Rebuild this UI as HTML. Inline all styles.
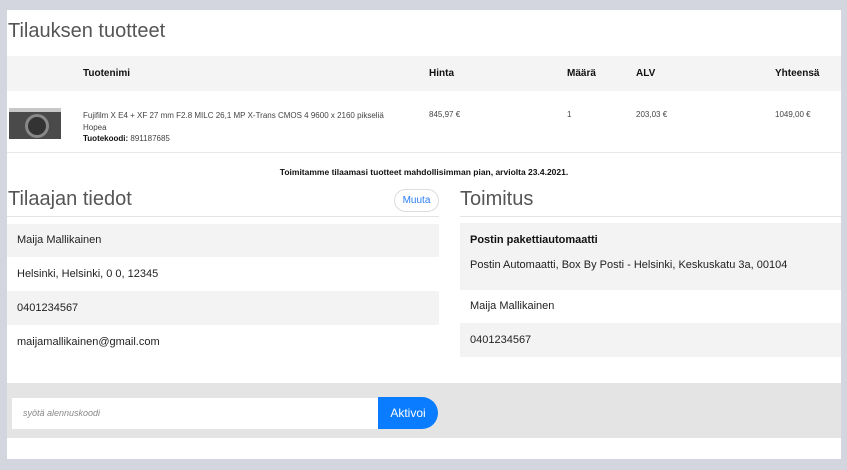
<!DOCTYPE html><html><head><style>
body{margin:0;width:847px;height:470px;background:#d3d6de;font-family:"Liberation Sans",Arial,sans-serif;position:relative;overflow:hidden}
.a{position:absolute;white-space:nowrap}
.p{position:absolute;left:7px;top:10px;width:834px;height:449px;background:#fff}
h1{position:absolute;margin:0;font-weight:normal;color:#555;font-size:20px}
.b{font-weight:bold}
</style></head><body>
<div class="p"></div>
<h1 style="left:8px;top:20px">Tilauksen tuotteet</h1>
<div class="a" style="left:7px;top:56px;width:834px;height:35px;background:#f4f4f4"></div>
<div class="a b" style="top:68px;left:83px;font-size:10px;color:#111">Tuotenimi</div>
<div class="a b" style="top:68px;left:429px;font-size:10px;color:#111">Hinta</div>
<div class="a b" style="top:68px;left:567px;font-size:10px;color:#111">Määrä</div>
<div class="a b" style="top:68px;left:636px;font-size:10px;color:#111">ALV</div>
<div class="a b" style="top:68px;left:775px;font-size:10px;color:#111">Yhteensä</div>
<div class="a" style="left:9px;top:108px;width:52px;height:31px;background:#4a4a4a;border-top:4px solid #c8c8c8;box-sizing:border-box"><div style="position:absolute;left:16px;top:2px;width:18px;height:18px;border-radius:50%;background:#333;border:3px solid #888"></div></div>
<div class="a" style="left:83px;top:110px;font-size:8px;color:#444;line-height:11.5px">Fujifilm X E4 + XF 27 mm F2.8 MILC 26,1 MP X-Trans CMOS 4 9600 x 2160 pikseliä<br>Hopea<br><span class="b" style="color:#111">Tuotekoodi:</span> 891187685</div>
<div class="a" style="left:429px;top:110px;font-size:8px;color:#444">845,97 €</div>
<div class="a" style="left:567px;top:110px;font-size:8px;color:#444">1</div>
<div class="a" style="left:636px;top:110px;font-size:8px;color:#444">203,03 €</div>
<div class="a" style="left:775px;top:110px;font-size:8px;color:#444">1049,00 €</div>
<div class="a" style="left:7px;top:152px;width:834px;height:1px;background:#e8e8e8"></div>
<div class="a b" style="left:7px;width:834px;text-align:center;top:167px;font-size:8.5px;color:#111">Toimitamme tilaamasi tuotteet mahdollisimman pian, arviolta 23.4.2021.</div>
<h1 style="left:8px;top:188px">Tilaajan tiedot</h1>
<div class="a" style="left:394px;top:189px;width:45px;height:23px;border:1px solid #ddd;border-radius:12px;box-sizing:border-box;font-size:10px;color:#2a7ef5;display:flex;align-items:center;justify-content:center">Muuta</div>
<div class="a" style="left:7px;top:216px;width:432px;height:1px;background:#e4e4e4"></div>
<div class="a" style="left:7px;top:224px;width:432px;height:33px;background:#f3f3f3"></div>
<div class="a" style="left:7px;top:291px;width:432px;height:34px;background:#f3f3f3"></div>
<div class="a" style="left:17px;top:234px;font-size:11px;color:#222">Maija Mallikainen</div>
<div class="a" style="left:17px;top:268px;font-size:11px;color:#222">Helsinki, Helsinki, 0 0, 12345</div>
<div class="a" style="left:17px;top:302px;font-size:11px;color:#222">0401234567</div>
<div class="a" style="left:17px;top:336px;font-size:11px;color:#222">maijamallikainen@gmail.com</div>
<h1 style="left:460px;top:188px">Toimitus</h1>
<div class="a" style="left:460px;top:216px;width:381px;height:1px;background:#e4e4e4"></div>
<div class="a" style="left:460px;top:223px;width:381px;height:67px;background:#f3f3f3"></div>
<div class="a" style="left:460px;top:323px;width:381px;height:34px;background:#f3f3f3"></div>
<div class="a b" style="left:470px;top:234px;font-size:11px;color:#111">Postin pakettiautomaatti</div>
<div class="a" style="left:470px;top:259px;font-size:11px;color:#222">Postin Automaatti, Box By Posti - Helsinki, Keskuskatu 3a, 00104</div>
<div class="a" style="left:470px;top:300px;font-size:11px;color:#222">Maija Mallikainen</div>
<div class="a" style="left:470px;top:334px;font-size:11px;color:#222">0401234567</div>
<div class="a" style="left:7px;top:383px;width:834px;height:55px;background:#e4e4e4"></div>
<div class="a" style="left:12px;top:398px;width:366px;height:31px;background:#fff;font-size:9px;font-style:italic;color:#888;line-height:31px;text-indent:11px">syötä alennuskoodi</div>
<div class="a" style="left:378px;top:397px;width:60px;height:32px;background:#0a7cff;border-radius:0 16px 16px 0;color:#fff;font-size:12px;text-align:center;line-height:32px">Aktivoi</div>
</body></html>
